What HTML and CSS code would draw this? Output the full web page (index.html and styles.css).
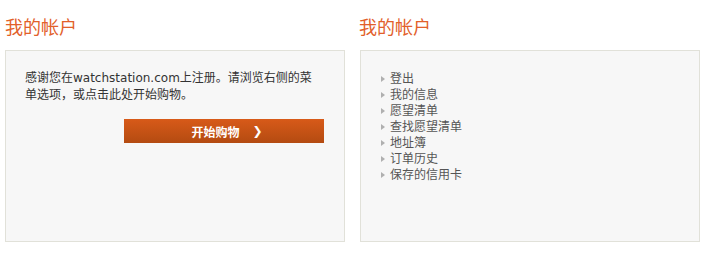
FILE: index.html
```html
<!DOCTYPE html>
<html lang="zh-CN">
<head>
<meta charset="utf-8">
<title>我的帐户</title>
<link rel="stylesheet" href="styles.css">
</head>
<body>
<div class="page">
  <section class="col">
    <h2 class="title">我的帐户</h2>
    <div class="box box-welcome">
      <p class="intro">感谢您在watchstation.com上注册。请浏览右侧的菜单选项，或点击此处开始购物。</p>
      <div class="btn-row">
        <a class="btn" href="#"><span>开始购物</span><span class="chev">&#10095;</span></a>
      </div>
    </div>
  </section>
  <section class="col">
    <h2 class="title">我的帐户</h2>
    <div class="box box-menu">
      <ul class="menu">
        <li>登出</li>
        <li>我的信息</li>
        <li>愿望清单</li>
        <li>查找愿望清单</li>
        <li>地址簿</li>
        <li>订单历史</li>
        <li>保存的信用卡</li>
      </ul>
    </div>
  </section>
</div>
</body>
</html>
```
FILE: styles.css
```css
html, body {
  margin: 0;
  padding: 0;
  background: #ffffff;
}
body {
  font-family: "DejaVu Sans", "Noto Sans CJK SC", sans-serif;
  font-size: 12px;
  color: #333333;
}
.page {
  display: flex;
  gap: 15px;
  padding: 14px 0 0 5px;
}
.col {
  width: 340px;
}
.title {
  margin: 0 0 12px 0;
  font-family: "Noto Sans CJK SC", sans-serif;
  font-weight: 400;
  font-size: 18px;
  line-height: 24px;
  color: #e2602a;
}
.col + .col .title {
  margin-left: -1px;
}
.box {
  position: relative;
  box-sizing: border-box;
  height: 192px;
  border: 1px solid #e1e1d9;
  background: #f7f7f7;
}
.box::after {
  content: "";
  position: absolute;
  left: 0;
  right: 0;
  top: 100%;
  height: 9px;
  margin-top: 1px;
  background: radial-gradient(ellipse 60% 100% at 50% 0%, rgba(0, 0, 0, 0.2), rgba(0, 0, 0, 0) 100%);
}
.intro {
  margin: 0;
  padding: 19px 0 0 19px;
  width: 292px;
  line-height: 17px;
  color: #333333;
}
.btn-row {
  display: flex;
  justify-content: flex-end;
  padding: 15px 20px 0 0;
}
.btn {
  width: 200px;
  height: 24px;
  display: flex;
  align-items: center;
  justify-content: center;
  gap: 13px;
  padding-left: 6px;
  box-sizing: border-box;
  background: linear-gradient(#d85a19, #b44b11);
  color: #ffffff;
  font-weight: 700;
  font-size: 12px;
  text-decoration: none;
  font-family: "Noto Sans CJK SC", sans-serif;
}
.chev {
  font-family: "DejaVu Sans", sans-serif;
  font-size: 12px;
}
.menu {
  list-style: none;
  margin: 0;
  padding: 20px 0 0 20px;
}
.menu li {
  position: relative;
  padding-left: 9px;
  line-height: 16px;
  color: #555555;
}
.menu li::before {
  content: "";
  position: absolute;
  left: 0;
  top: 5px;
  width: 0;
  height: 0;
  border-top: 3px solid transparent;
  border-bottom: 3px solid transparent;
  border-left: 4px solid #b0b0b0;
}
```
